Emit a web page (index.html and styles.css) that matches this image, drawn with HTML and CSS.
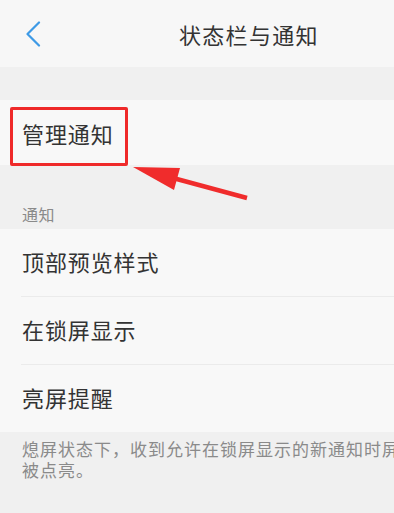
FILE: index.html
```html
<!DOCTYPE html>
<html lang="zh-CN">
<head>
<meta charset="utf-8">
<title>状态栏与通知</title>
<link rel="stylesheet" href="styles.css">
</head>
<body>
<div class="page">
  <header class="topbar">
    <svg class="back" width="16" height="26" viewBox="0 0 16 26">
      <path d="M14 1.5 L2.5 13 L14 24.5" fill="none" stroke="#3e9ae6" stroke-width="2.2" stroke-linecap="round" stroke-linejoin="round"/>
    </svg>
    <h1 class="title">状态栏与通知</h1>
  </header>
  <div class="spacer"></div>
  <div class="row row-manage">
    <span class="label">管理通知</span>
    <div class="highlight"></div>
  </div>
  <div class="section">
    <span class="section-title">通知</span>
    <svg class="arrow" width="130" height="45" viewBox="0 0 130 45">
      <polygon points="0,2 47,3 41,25" fill="#f02c2c"/>
      <line x1="40" y1="13" x2="114" y2="33" stroke="#f02c2c" stroke-width="4.5" stroke-linecap="butt"/>
    </svg>
  </div>
  <div class="group">
    <div class="row divided"><span class="label">顶部预览样式</span></div>
    <div class="row divided"><span class="label">在锁屏显示</span></div>
    <div class="row"><span class="label">亮屏提醒</span></div>
  </div>
  <div class="footer">
    <p class="desc">熄屏状态下，收到允许在锁屏显示的新通知时屏幕会被点亮。</p>
  </div>
</div>
</body>
</html>
```

FILE: styles.css
```css
html, body {
  margin: 0;
  padding: 0;
  background: #f0f0f0;
}
body {
  font-family: "Noto Sans CJK SC", "Noto Sans", sans-serif;
  color: #333;
  overflow: hidden;
}
.page {
  width: 394px;
  height: 513px;
  overflow: hidden;
  background: #f0f0f0;
}
.topbar {
  height: 67px;
  background: #f7f7f7;
  display: flex;
  align-items: center;
}
.back {
  margin-left: 25px;
  flex: none;
}
.title {
  margin: 0 0 0 138px;
  font-size: 22px;
  font-weight: 400;
  letter-spacing: 1.3px;
  color: #333;
  line-height: 1;
  white-space: nowrap;
}
.spacer {
  height: 33px;
  background: #f0f0f0;
}
.row {
  background: #f8f8f8;
  height: 67px;
  display: flex;
  align-items: center;
  padding-left: 22px;
  box-sizing: border-box;
}
.group .row {
  padding-bottom: 4px;
}
.row-manage {
  height: 65px;
  position: relative;
}
.label {
  font-size: 22px;
  letter-spacing: 0.9px;
  line-height: 1;
  color: #333;
  white-space: nowrap;
}
.highlight {
  position: absolute;
  left: 10px;
  top: 7px;
  width: 118px;
  height: 59px;
  box-sizing: border-box;
  border: 3px solid #ef2a2a;
  border-radius: 2px;
}
.section {
  height: 64px;
  position: relative;
  display: flex;
  align-items: flex-end;
  padding-left: 22px;
  box-sizing: border-box;
  padding-bottom: 5px;
}
.section-title {
  font-size: 16px;
  color: #8a8a8a;
  letter-spacing: 0.6px;
  line-height: 20px;
}
.arrow {
  position: absolute;
  left: 133px;
  top: 0px;
}
.group {
  display: flex;
  flex-direction: column;
}
.divided {
  position: relative;
  height: 68px;
}
.divided::after {
  content: "";
  position: absolute;
  left: 21px;
  right: 0;
  bottom: 0;
  height: 1px;
  background: #ebebeb;
}
.footer {
  padding: 6px 0 0 22px;
}
.desc {
  margin: 0;
  width: 420px;
  font-size: 17px;
  letter-spacing: 1px;
  line-height: 21px;
  color: #8a8a8a;
}
```
